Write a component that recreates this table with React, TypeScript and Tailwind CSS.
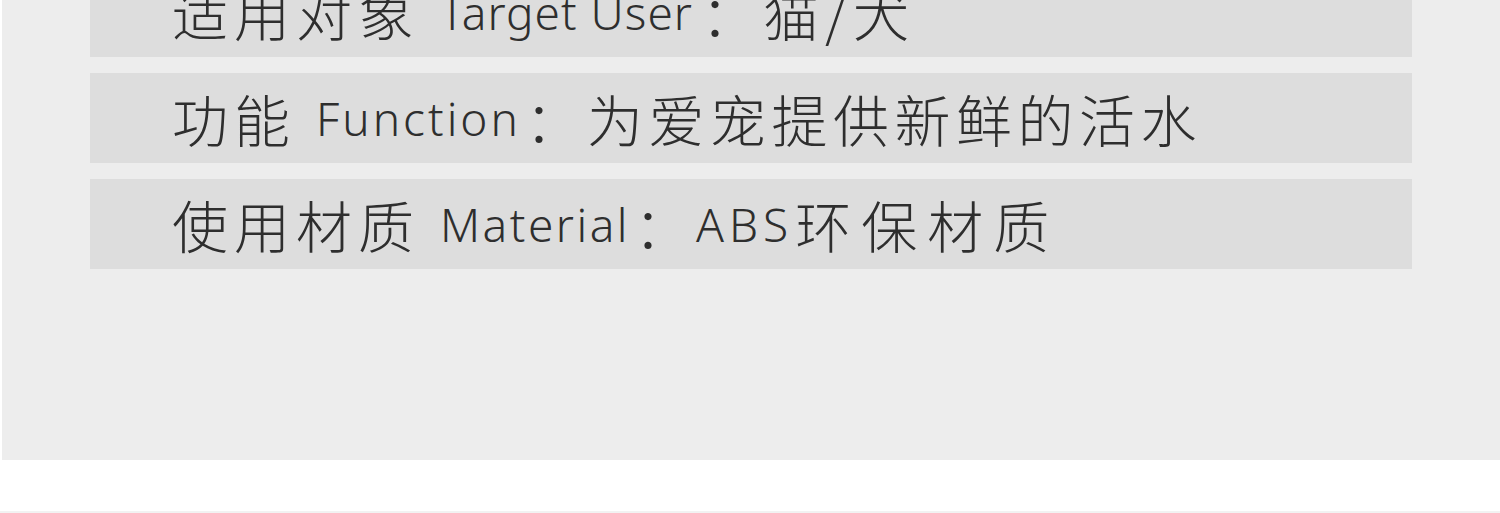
import React from "react";

const cjk = "font-['Noto_Sans_CJK_SC',sans-serif] font-light text-[56px] tracking-[6px]";
const lat = "font-['Noto_Sans','Noto_Sans_CJK_SC',sans-serif] font-light text-[46px]";

function Row({
  zh,
  en,
  enTrack,
  colonGap,
  value,
}: {
  zh: string;
  en: string;
  enTrack: string;
  colonGap: string;
  value: React.ReactNode;
}) {
  return (
    <div className="h-[90px] bg-[#dddddd] flex items-center pl-[82px] text-[#2e2e2e] whitespace-nowrap leading-none">
      <span className={cjk}>{zh}</span>
      <span className={lat + " ml-[20px] " + enTrack}>{en}</span>
      <span className={cjk + " " + colonGap}>：</span>
      {value}
    </div>
  );
}

export default function App() {
  return (
    <div className="w-[1500px] h-[513px] bg-white flex flex-col overflow-hidden">
      <div className="h-[460px] bg-[#ededed] ml-[2px] overflow-hidden shrink-0">
        <div className="mt-[-33px] mx-[88px] flex flex-col gap-[16px]">
          <Row
            zh="适用对象"
            en="Target User"
            enTrack="tracking-[1px]"
            colonGap="ml-[8px]"
            value={<span className={cjk}>猫/犬</span>}
          />
          <Row
            zh="功能"
            en="Function"
            enTrack="tracking-[3px]"
            colonGap="ml-[4px]"
            value={
              <span className="font-['Noto_Sans_CJK_SC',sans-serif] font-light text-[56px] tracking-[5.5px]">
                为爱宠提供新鲜的活水
              </span>
            }
          />
          <Row
            zh="使用材质"
            en="Material"
            enTrack="tracking-[2.5px]"
            colonGap="ml-[4px]"
            value={
              <>
                <span className={lat + " tracking-[5px]"}>ABS</span>
                <span className={cjk + " ml-[2px] tracking-[10px]"}>环保材质</span>
              </>
            }
          />
        </div>
      </div>
      <div className="flex-1" />
      <div className="h-[2px] bg-[#f2f2f2]" />
    </div>
  );
}
